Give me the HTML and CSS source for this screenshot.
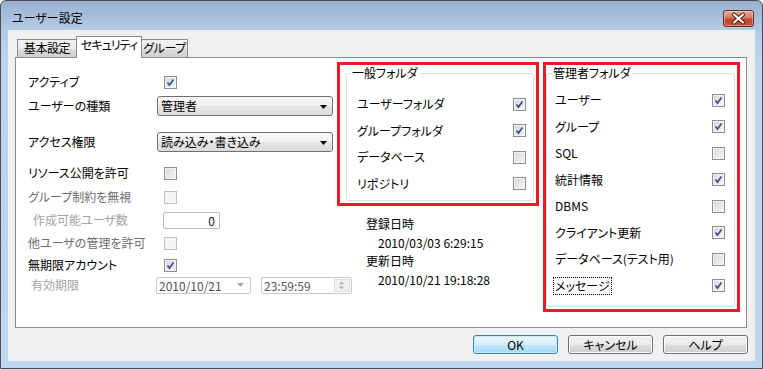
FILE: index.html
```html
<!DOCTYPE html>
<html lang="ja">
<head>
    <meta charset="UTF-8">
    <title>ユーザー設定</title>
    <link rel="stylesheet" href="styles.css">
</head>
<body>
<div class="window">
    <div class="titlebar">
        <span class="title">ユーザー設定</span>
        <button class="close-btn">
            <svg width="31" height="17" viewBox="0 0 31 17">
                <path d="M11 4.5 L20 12.5 M20 4.5 L11 12.5" stroke="#4a2020" stroke-width="4" stroke-linecap="round"/>
                <path d="M11 4.5 L20 12.5 M20 4.5 L11 12.5" stroke="#fff" stroke-width="2" stroke-linecap="round"/>
            </svg>
        </button>
    </div>

    <div class="client">
        <div class="tabs">
            <div class="tab first">基本設定</div>
            <div class="tab active">セキュリティ</div>
            <div class="tab last">グループ</div>
        </div>

        <div class="panel">
            <!-- left: account settings -->
            <div class="form">
                <div class="cell">アクティブ</div>
                <div class="cell"><span class="check on"><svg width="11" height="11" viewBox="0 0 11 11"><path d="M2.5 5.5 L4.5 8 L8.5 2.5" fill="none" stroke="#3b4f8f" stroke-width="1.7"/></svg></span></div>

                <div class="cell">ユーザーの種類</div>
                <div class="cell">
                    <div class="combo"><span>管理者</span><svg width="7" height="4" viewBox="0 0 7 4"><path d="M0 0H7L3.5 4Z"/></svg></div>
                </div>

                <div class="cell">アクセス権限</div>
                <div class="cell">
                    <div class="combo"><span>読み込み・書き込み</span><svg width="7" height="4" viewBox="0 0 7 4"><path d="M0 0H7L3.5 4Z"/></svg></div>
                </div>

                <div class="cell">リソース公開を許可</div>
                <div class="cell"><span class="check"></span></div>

                <div class="cell dim">グループ制約を無視</div>
                <div class="cell"><span class="check off"></span></div>

                <div class="cell disabled indent">作成可能ユーザ数</div>
                <div class="cell"><div class="number">0</div></div>

                <div class="cell dim">他ユーザの管理を許可</div>
                <div class="cell"><span class="check off"></span></div>

                <div class="cell">無期限アカウント</div>
                <div class="cell"><span class="check on"><svg width="11" height="11" viewBox="0 0 11 11"><path d="M2.5 5.5 L4.5 8 L8.5 2.5" fill="none" stroke="#3b4f8f" stroke-width="1.7"/></svg></span></div>

                <div class="cell disabled indent-sm">有効期限</div>
                <div class="cell">
                    <div class="datebox"><span>2010/10/21</span><svg width="7" height="4" viewBox="0 0 7 4"><path d="M0 0H7L3.5 4Z" fill="#a8a8a8"/></svg></div>
                    <div class="timebox">
                        <span>23:59:59</span>
                        <div class="spin">
                            <svg width="15" height="6" viewBox="0 0 15 6"><path d="M4.5 4.5H10.5L7.5 1.5Z" fill="#b0b0b0"/></svg>
                            <svg width="15" height="6" viewBox="0 0 15 6"><path d="M4.5 1.5H10.5L7.5 4.5Z" fill="#b0b0b0"/></svg>
                        </div>
                    </div>
                </div>
            </div>

            <!-- middle: general folders and timestamps -->
            <div class="middle">
                <div class="mark">
                    <fieldset class="group general">
                        <legend>一般フォルダ</legend>
                        <div class="item"><span>ユーザーフォルダ</span><span class="check on"><svg width="11" height="11" viewBox="0 0 11 11"><path d="M2.5 5.5 L4.5 8 L8.5 2.5" fill="none" stroke="#3b4f8f" stroke-width="1.7"/></svg></span></div>
                        <div class="item"><span>グループフォルダ</span><span class="check on"><svg width="11" height="11" viewBox="0 0 11 11"><path d="M2.5 5.5 L4.5 8 L8.5 2.5" fill="none" stroke="#3b4f8f" stroke-width="1.7"/></svg></span></div>
                        <div class="item"><span>データベース</span><span class="check"></span></div>
                        <div class="item"><span>リポジトリ</span><span class="check"></span></div>
                    </fieldset>
                </div>
                <div class="dates">
                    <div>登録日時</div>
                    <div class="stamp">2010/03/03 6:29:15</div>
                    <div>更新日時</div>
                    <div class="stamp">2010/10/21 19:18:28</div>
                </div>
            </div>

            <!-- right: admin folders -->
            <div class="mark">
                <fieldset class="group admin">
                    <legend>管理者フォルダ</legend>
                    <div class="item"><span>ユーザー</span><span class="check on"><svg width="11" height="11" viewBox="0 0 11 11"><path d="M2.5 5.5 L4.5 8 L8.5 2.5" fill="none" stroke="#3b4f8f" stroke-width="1.7"/></svg></span></div>
                    <div class="item"><span>グループ</span><span class="check on"><svg width="11" height="11" viewBox="0 0 11 11"><path d="M2.5 5.5 L4.5 8 L8.5 2.5" fill="none" stroke="#3b4f8f" stroke-width="1.7"/></svg></span></div>
                    <div class="item"><span>SQL</span><span class="check"></span></div>
                    <div class="item"><span>統計情報</span><span class="check on"><svg width="11" height="11" viewBox="0 0 11 11"><path d="M2.5 5.5 L4.5 8 L8.5 2.5" fill="none" stroke="#3b4f8f" stroke-width="1.7"/></svg></span></div>
                    <div class="item"><span>DBMS</span><span class="check"></span></div>
                    <div class="item"><span>クライアント更新</span><span class="check on"><svg width="11" height="11" viewBox="0 0 11 11"><path d="M2.5 5.5 L4.5 8 L8.5 2.5" fill="none" stroke="#3b4f8f" stroke-width="1.7"/></svg></span></div>
                    <div class="item"><span>データベース(テスト用)</span><span class="check"></span></div>
                    <div class="item"><span class="focus">メッセージ</span><span class="check on"><svg width="11" height="11" viewBox="0 0 11 11"><path d="M2.5 5.5 L4.5 8 L8.5 2.5" fill="none" stroke="#3b4f8f" stroke-width="1.7"/></svg></span></div>
                </fieldset>
            </div>
        </div>

        <div class="buttons">
            <button class="btn default">OK</button>
            <button class="btn">キャンセル</button>
            <button class="btn">ヘルプ</button>
        </div>
    </div>
</div>
</body>
</html>
```

FILE: styles.css
```css
* {
    box-sizing: border-box;
}

body {
    margin: 0;
    font-family: "Noto Sans CJK JP", "Noto Sans", sans-serif;
    font-size: 12px;
    font-feature-settings: "palt";
    color: #000;
    background: #fff;
}

.window {
    width: 763px;
    height: 369px;
    border: 1px solid #4b4f55;
    border-radius: 6px 6px 0 0;
    background: linear-gradient(#98b1cf, #b5cce6 30px, #bcd4ec 60px, #bfd6ee);
}

/* title bar */
.titlebar {
    height: 29px;
    display: flex;
    align-items: center;
    justify-content: space-between;
    padding: 5px 8px 0 11px;
}

.title {
    font-size: 12px;
    line-height: 16px;
}

.close-btn {
    width: 31px;
    height: 17px;
    padding: 0;
    border: 1px solid #6a2a22;
    border-radius: 3px;
    background: linear-gradient(#e6a996, #d47a66 45%, #c0432c 55%, #c9553c);
    box-shadow: inset 0 0 0 1px rgba(255, 255, 255, 0.35);
    display: flex;
    align-items: center;
    justify-content: center;
}

.close-btn svg {
    display: block;
    margin: -1px;
}

/* client area */
.client {
    margin: 0 7px;
    height: 331px;
    background: #f0f0f0;
    padding: 6px 0 0 7px;
}

.tabs {
    display: flex;
    align-items: flex-end;
    height: 21px;
    padding-left: 2px;
}

.tab {
    height: 18px;
    line-height: 16px;
    text-align: center;
    white-space: nowrap;
    letter-spacing: -0.4px;
    border: 1px solid #898c95;
    border-bottom: none;
    background: linear-gradient(#f2f2f2, #ebebeb 50%, #dddddd 51%, #cfcfcf);
}

.tab.first {
    width: 59px;
    border-right: none;
}

.tab.active {
    width: 66px;
    height: 22px;
    margin-bottom: -1px;
    padding-bottom: 4px;
    letter-spacing: -1px;
    background: #fff;
    position: relative;
    z-index: 1;
}

.tab.last {
    width: 46px;
    border-left: none;
}

.panel {
    width: 732px;
    height: 271px;
    border: 1px solid #898c95;
    background: #fff;
    display: grid;
    grid-template-columns: 309px 206px 197px;
    align-items: start;
    padding: 4px 0 0 12px;
}

/* left form */
.form {
    margin-top: 10px;
    display: grid;
    grid-template-columns: 129px 176px;
    grid-template-rows: 24px 36px 31px 24px 23px 23px 22px 20px 20px;
    align-items: start;
}

.cell {
    height: 20px;
    line-height: 16px;
    display: flex;
    align-items: center;
    white-space: nowrap;
}

.cell.dim {
    color: #6d6d6d;
}

.cell.disabled {
    color: #a3a3a3;
}

.cell.indent {
    padding-left: 5px;
}

.cell.indent-sm {
    padding-left: 3px;
}

.check {
    width: 13px;
    height: 13px;
    flex: none;
    border: 1px solid #8e8f8f;
    background: linear-gradient(135deg, #d4d6d9, #f7f7f7);
    box-shadow: inset 0 0 0 1px #f4f4f4;
    display: inline-flex;
    align-items: center;
    justify-content: center;
}

.cell .check {
    margin-left: 7px;
}

.check.off {
    border-color: #bfbfbf;
    background: #f5f5f5;
    box-shadow: none;
}

.check svg {
    display: block;
}

.combo {
    width: 176px;
    height: 20px;
    border: 1px solid #707070;
    border-radius: 3px;
    background: linear-gradient(#f8f8f8, #f0f0f0 50%, #e6e6e6 51%, #dcdcdc);
    display: flex;
    align-items: center;
    justify-content: space-between;
    padding: 0 5px 0 3px;
    line-height: 16px;
}

.combo svg {
    margin-top: 1px;
}

.number {
    width: 57px;
    height: 17px;
    margin-left: 6px;
    border: 1px solid #b8bcc4;
    border-radius: 2px;
    text-align: right;
    padding-right: 4px;
    line-height: 15px;
    color: #222;
}

.datebox,
.timebox {
    flex: none;
    height: 17px;
    border: 1px solid #c7c9ce;
    border-radius: 2px;
    display: flex;
    align-items: center;
    justify-content: space-between;
    line-height: 15px;
    color: #555;
}

.datebox {
    width: 95px;
    margin-left: -1px;
    padding: 0 6px 0 2px;
}

.timebox {
    width: 91px;
    margin-left: 10px;
    padding: 0 1px 0 2px;
}

.spin {
    width: 16px;
    height: 13px;
    background: #f0f0f0;
    border: 1px solid #e0e0e0;
    display: flex;
    flex-direction: column;
    justify-content: center;
}

.spin svg {
    display: block;
    margin-left: -1px;
}

/* folder groups */
.mark {
    border: 3px solid #ed1c24;
    padding: 0 2px 2px 0;
}

.middle .mark {
    width: 202px;
    padding-left: 6px;
}

.group {
    margin: 0;
    min-width: 0;
    border: 1px solid #d5dfe5;
    border-radius: 3px;
}

.group legend {
    padding: 0 1px;
    line-height: 16px;
}

.general {
    padding: 10px 7px 3px 10px;
}

.general legend {
    margin-left: -6px;
}

.admin {
    padding: 6px 9px 7px 8px;
}

.admin legend {
    margin-left: -3px;
}

.item {
    height: 26.5px;
    line-height: 16px;
    display: flex;
    align-items: center;
    justify-content: space-between;
}

.focus {
    outline: 1px dotted #000;
    outline-offset: 0;
    padding: 0 1px;
    margin-left: -1px;
}

.dates {
    padding: 9px 0 0 29px;
    line-height: 18.5px;
}

.dates .stamp {
    padding-left: 12px;
}

/* dialog buttons */
.buttons {
    display: flex;
    justify-content: flex-end;
    gap: 10px;
    margin-top: 7px;
    padding-right: 7px;
}

.btn {
    width: 85px;
    height: 19px;
    padding: 0;
    font-family: inherit;
    font-size: 12px;
    font-feature-settings: "palt";
    line-height: 16px;
    color: #000;
    border: 1px solid #707070;
    border-radius: 3px;
    background: linear-gradient(#f2f2f2, #ebebeb 50%, #dddddd 51%, #cfcfcf);
    box-shadow: inset 0 0 0 1px #fbfbfb;
}

.btn.default {
    border-color: #3c7fb1;
    background: linear-gradient(#eaf6fd, #d9f0fc 50%, #bee6fd 51%, #a7d9f5);
    box-shadow: inset 0 0 0 1px #c6ecfc;
}
```
